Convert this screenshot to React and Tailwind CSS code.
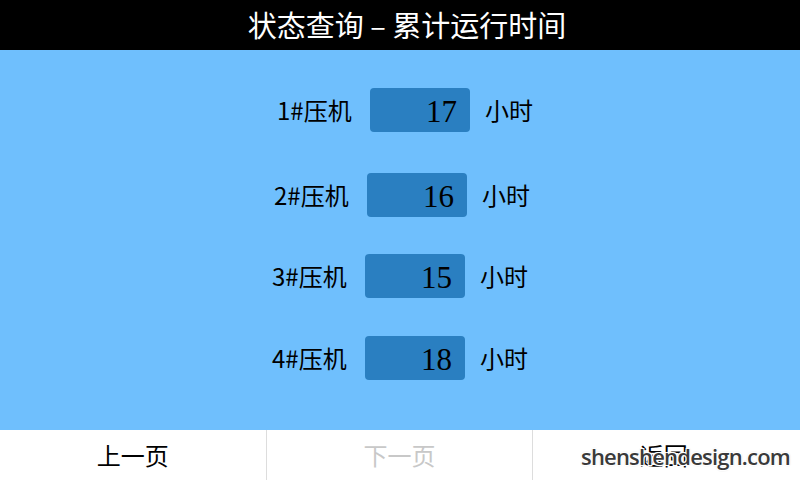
import React from "react";

const rows = [
  { name: "1#压机", hours: 17, pad: "pl-[277px]", top: "mt-[38px]" },
  { name: "2#压机", hours: 16, pad: "pl-[274px]", top: "mt-[41px]" },
  { name: "3#压机", hours: 15, pad: "pl-[272px]", top: "mt-[37px]" },
  { name: "4#压机", hours: 18, pad: "pl-[272px]", top: "mt-[38px]" },
];

const cjk = { fontFamily: '"Noto Sans CJK SC", "Noto Sans", sans-serif' };

const RuntimeRow = ({ name, hours, pad, top }) => (
  <div className={`flex items-center ${pad} ${top}`}>
    <div className="w-[93px] text-[24px] text-black leading-none">{name}</div>
    <div
      className="w-[100px] h-[44px] rounded-[4px] bg-[#2a7fc1] flex items-center justify-end pr-[13px] pt-[2px] text-[31px] leading-none text-black"
      style={{ fontFamily: '"Liberation Serif", "DejaVu Serif", serif' }}
    >
      {hours}
    </div>
    <div className="ml-[15px] text-[24px] text-black leading-none">小时</div>
  </div>
);

const App = () => {
  return (
    <div className="w-[800px] h-[480px] flex flex-col overflow-hidden" style={cjk}>
      <div className="h-[50px] bg-black flex items-center justify-center pl-[14px] text-white text-[29px]">
        状态查询 – 累计运行时间
      </div>

      <div className="flex-1 bg-[#6fbffd] flex flex-col">
        {rows.map((r) => (
          <RuntimeRow key={r.name} {...r} />
        ))}
      </div>

      <div className="h-[50px] bg-white grid grid-cols-3 relative">
        <div className="flex items-center justify-center text-[24px] text-black border-r border-[#dddddd]">
          上一页
        </div>
        <div className="flex items-center justify-center text-[24px] text-[#c8c8c8] border-r border-[#dddddd]">
          下一页
        </div>
        <div className="flex items-center justify-center pr-[6px] text-[24px] text-black">
          返回
        </div>
        <span
          className="absolute right-[10px] top-[15px] text-[22px] leading-none font-semibold text-[#3a3a3a] tracking-[-0.8px]"
          style={{
            fontFamily: '"Open Sans", "DejaVu Sans", sans-serif',
            textShadow: "1px 1px 0 #fff, -1px -1px 0 #fff, 1px -1px 0 #fff, -1px 1px 0 #fff, 0 0 2px #888",
          }}
        >
          shenshendesign.com
        </span>
      </div>
    </div>
  );
};

export default App;
